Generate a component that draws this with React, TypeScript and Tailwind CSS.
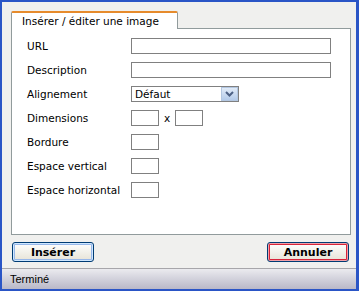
const font = "font-['DejaVu_Sans',Verdana,sans-serif]";

function Field({ w }: { w: string }) {
  return <div className={`${w} h-[16px] border border-[#808080] bg-white`} />;
}

function Row({ label, children }: { label: string; children: React.ReactNode }) {
  return (
    <div className="grid grid-cols-[104px_1fr] h-[24px] items-center">
      <span className="text-[10.5px] leading-none text-black">{label}</span>
      <div className="flex items-center">{children}</div>
    </div>
  );
}

export default function App() {
  return (
    <div
      className={`${font} w-[359px] h-[291px] flex flex-col bg-[#f0f0ee] border-solid border-[#2a55c6] border-t-2 border-l-2 border-r-[3px] border-b-2`}
    >
      <div className="pl-[9px] pt-[9px]">
        {/* tab */}
        <div className="relative z-10 w-[167px] h-[18px] -mb-[1px] bg-white border-l border-r border-[#919b9c] border-t-2 border-t-[#e68b2c] rounded-t-[2px] flex items-center pl-[10px]">
          <span className="text-[10.5px] leading-none text-black whitespace-nowrap">Insérer / éditer une image</span>
        </div>

        {/* panel */}
        <div className="w-[340px] h-[207px] border border-[#919b9c] bg-white pl-[15px] pt-[5px]">
          <Row label="URL">
            <Field w="w-[200px]" />
          </Row>
          <Row label="Description">
            <Field w="w-[200px]" />
          </Row>
          <Row label="Alignement">
            <div className="w-[108px] h-[16px] border border-[#808080] bg-white flex items-center justify-between">
              <span className="pl-[3px] text-[10.5px] leading-none text-black">Défaut</span>
              <div className="w-[17px] h-[14px] border border-[#b3c7e1] bg-gradient-to-b from-[#e1ebf8] to-[#b4cbea] flex items-center justify-center">
                <svg width="9" height="6" viewBox="0 0 9 6">
                  <path d="M1 1 L4.5 4.5 L8 1" stroke="#4d6185" strokeWidth="2" fill="none" />
                </svg>
              </div>
            </div>
          </Row>
          <Row label="Dimensions">
            <Field w="w-[28px]" />
            <span className="mx-[5px] text-[10.5px] leading-none text-black">x</span>
            <Field w="w-[28px]" />
          </Row>
          <Row label="Bordure">
            <Field w="w-[28px]" />
          </Row>
          <Row label="Espace vertical">
            <Field w="w-[28px]" />
          </Row>
          <Row label="Espace horizontal">
            <Field w="w-[28px]" />
          </Row>
        </div>
      </div>

      {/* buttons */}
      <div className="mt-[7px] pl-[10px] pr-[7px] flex justify-between">
        <button className="w-[82px] h-[20px] rounded-[3px] border border-[#003c74] bg-gradient-to-b from-white to-[#e6e3d6] shadow-[inset_0_0_0_1px_#cee7ff,inset_0_0_0_2px_#98b8ea] text-[11px] font-bold text-black leading-none">
          Insérer
        </button>
        <button className="w-[82px] h-[20px] rounded-[3px] border border-[#003c74] bg-gradient-to-b from-white to-[#e6e3d6] shadow-[inset_0_0_0_1px_#f0a0a8,inset_0_0_0_2px_#d8243a] text-[11px] font-bold text-black leading-none">
          Annuler
        </button>
      </div>

      {/* status bar */}
      <div className="mt-auto h-[21px] border-t border-[#a7a6aa] bg-gradient-to-b from-[#ebebef] to-[#b9b8c8] flex items-center pl-[8px]">
        <span className="font-['Liberation_Sans',Arial,sans-serif] text-[11px] leading-none text-black">Terminé</span>
      </div>
    </div>
  );
}
